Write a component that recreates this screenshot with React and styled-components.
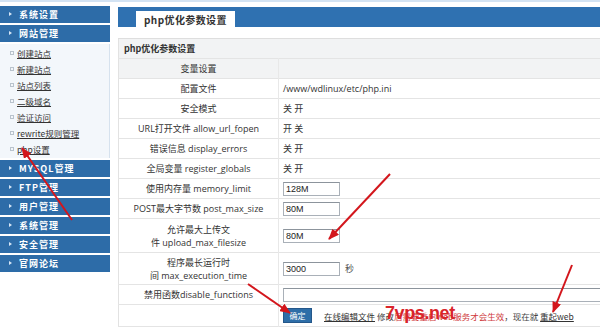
import React from 'react';
import styled, { createGlobalStyle } from 'styled-components';

const Global = createGlobalStyle`
  html, body { margin: 0; padding: 0; background: #fff; }
  body { font-family: "Open Sans", "Noto Sans CJK SC", sans-serif; }
`;

const Page = styled.div`
  position: relative;
  display: flex;
  width: 600px;
  height: 335px;
  overflow: hidden;
  border-top: 2px solid #d3e3f3;
  box-sizing: border-box;
  background: #fff;
`;

const Sidebar = styled.nav`
  width: 110px;
  flex-shrink: 0;
  padding-top: 4px;
`;

const MenuBar = styled.div`
  position: relative;
  height: 17px;
  margin-bottom: 2px;
  padding-left: 19px;
  display: flex;
  align-items: center;
  background: #2d6ca8;
  color: #fff;
  font-family: "Noto Sans CJK SC", sans-serif;
  font-weight: 700;
  font-size: 9px;
  letter-spacing: 1px;
  &::before {
    content: '';
    position: absolute;
    left: 9px;
    top: 6px;
    border-left: 3px solid #d6e6f6;
    border-top: 2.5px solid transparent;
    border-bottom: 2.5px solid transparent;
  }
`;

const SubMenu = styled.div`
  background: #f3f7fb;
  border-right: 1px solid #d6e2ee;
  margin-bottom: 2px;
  padding: 1px 0;
`;

const SubItem = styled.div`
  height: 16px;
  display: flex;
  align-items: center;
  padding-left: 10px;
  gap: 3px;
  font-family: "Noto Sans CJK SC", sans-serif;
  font-size: 8.5px;
  color: #333;
  & span { text-decoration: underline; }
`;

const Bullet = styled.i`
  width: 2px;
  height: 2px;
  border: 1px solid #b9c3cd;
`;

const Main = styled.main`
  flex: 1;
  margin-left: 8px;
  padding-top: 5px;
  min-width: 0;
`;

const TabBar = styled.div`
  height: 20px;
  padding-left: 18px;
  display: flex;
  align-items: flex-end;
  background: #2f71b1;
`;

const Tab = styled.div`
  height: 16px;
  padding: 0 8px;
  display: flex;
  align-items: center;
  background: #fff;
  color: #333;
  font-family: "Noto Sans CJK SC", sans-serif;
  font-weight: 700;
  font-size: 10px;
  letter-spacing: 0.4px;
`;

const Table = styled.table`
  margin-top: 11px;
  width: 482px;
  border-collapse: collapse;
  border-top: 1px solid #dedede;
  border-left: 1px solid #e2e2e2;
  font-size: 9px;
  color: #333;
  table-layout: fixed;
`;

const Row = styled.tr`
  height: ${p => p.$h || 20}px;
  background: ${p => (p.$grey ? '#f2f3f4' : '#fff')};
  border-bottom: 1px solid #e4e4e4;
`;

const TitleCell = styled.td`
  padding: 0 0 0 5px;
  font-family: "Noto Sans CJK SC", sans-serif;
  font-weight: 700;
  font-size: 9px;
`;

const Label = styled.td`
  padding: 0;
  text-align: center;
  line-height: 13px;
  border-right: 1px solid #e8e8e8;
`;

const Value = styled.td`
  padding: 0 0 0 4px;
  white-space: nowrap;
`;

const Field = styled.input`
  box-sizing: border-box;
  width: ${p => p.$w || 57}px;
  height: 14px;
  padding: 0 2px;
  border: 1px solid #a9b0b8;
  border-top-color: #8c949c;
  font-family: "Liberation Sans", sans-serif;
  font-size: 9px;
  color: #222;
  vertical-align: middle;
`;

const Unit = styled.span`
  margin-left: 5px;
  color: #555;
  vertical-align: middle;
`;

const Button = styled.button`
  box-sizing: border-box;
  width: 29px;
  height: 15px;
  padding: 0;
  border: 1px solid #24578a;
  background: #2e6ea8;
  color: #fff;
  font-family: "Noto Sans CJK SC", sans-serif;
  font-size: 8px;
  vertical-align: middle;
`;

const Note = styled.span`
  margin-left: 12px;
  font-family: "Noto Sans CJK SC", sans-serif;
  font-size: 8.5px;
  color: #444;
  vertical-align: middle;
`;

const NoteLink = styled.span`
  text-decoration: underline;
  color: #333;
`;

const Warn = styled.span`
  color: #cf3a3d;
`;

const Watermark = styled.div`
  position: absolute;
  left: 385px;
  top: 301px;
  font-family: "Liberation Sans", sans-serif;
  font-weight: 700;
  font-size: 18px;
  letter-spacing: -0.4px;
  color: #d9242a;
`;

const Arrows = styled.svg`
  position: absolute;
  left: 0;
  top: 0;
  pointer-events: none;
`;

const menuTop = ['系统设置'];
const sites = ['创建站点', '新建站点', '站点列表', '二级域名', '验证访问', 'rewrite规则管理', 'php设置'];
const menuBottom = ['MYSQL管理', 'FTP管理', '用户管理', '系统管理', '安全管理', '官网论坛'];

const rows = [
  { label: '配置文件', value: '/www/wdlinux/etc/php.ini' },
  { label: '安全模式', value: '关 开' },
  { label: 'URL打开文件 allow_url_fopen', value: '开 关' },
  { label: '错误信息 display_errors', value: '关 开' },
  { label: '全局变量 register_globals', value: '关 开' },
  { label: '使用内存量 memory_limit', input: '128M' },
  { label: 'POST最大字节数 post_max_size', input: '80M' },
  { label: ['允许最大上传文', '件 upload_max_filesize'], input: '80M', h: 34 },
  { label: ['程序最长运行时', '间 max_execution_time'], input: '3000', unit: '秒', h: 32 },
  { label: '禁用函数disable_functions', input: '', w: 340 },
];

const arrows = [
  [72, 218, 22, 146],
  [390, 172, 329, 237],
  [248, 282, 290, 311],
  [572, 263, 553, 310],
];

export default function App() {
  return (
    <>
      <Global />
      <Page>
        <Sidebar>
          {menuTop.map(m => <MenuBar key={m}>{m}</MenuBar>)}
          <MenuBar>网站管理</MenuBar>
          <SubMenu>
            {sites.map(s => (
              <SubItem key={s}><Bullet /><span>{s}</span></SubItem>
            ))}
          </SubMenu>
          {menuBottom.map(m => <MenuBar key={m}>{m}</MenuBar>)}
        </Sidebar>
        <Main>
          <TabBar><Tab>php优化参数设置</Tab></TabBar>
          <Table>
            <colgroup>
              <col style={{ width: 160 }} />
              <col />
            </colgroup>
            <tbody>
              <Row $grey><TitleCell colSpan={2}>php优化参数设置</TitleCell></Row>
              <Row $grey><Label>变量设置</Label><Value /></Row>
              {rows.map((r, i) => (
                <Row key={i} $h={r.h}>
                  <Label>
                    {Array.isArray(r.label) ? <>{r.label[0]}<br />{r.label[1]}</> : r.label}
                  </Label>
                  <Value>
                    {r.input !== undefined ? (
                      <>
                        <Field $w={r.w} defaultValue={r.input} />
                        {r.unit && <Unit>{r.unit}</Unit>}
                      </>
                    ) : r.value}
                  </Value>
                </Row>
              ))}
              <Row $h={22}>
                <Label />
                <Value>
                  <Button>确定</Button>
                  <Note>
                    <NoteLink>在线编辑文件</NoteLink> 修改<Warn>后需要重启web服务才会生效</Warn>，现在就 <NoteLink>重起web</NoteLink>
                  </Note>
                </Value>
              </Row>
            </tbody>
          </Table>
        </Main>
        <Watermark>7vps.net</Watermark>
        <Arrows width="600" height="335" viewBox="0 0 600 335">
          <defs>
            <marker id="head" markerUnits="userSpaceOnUse" markerWidth="11" markerHeight="9" refX="10" refY="4.5" orient="auto">
              <path d="M0,0 L11,4.5 L0,9 z" fill="#d3161c" />
            </marker>
          </defs>
          {arrows.map(([x1, y1, x2, y2], i) => (
            <line key={i} x1={x1} y1={y1} x2={x2} y2={y2} stroke="#d3161c" strokeWidth="2" markerEnd="url(#head)" />
          ))}
        </Arrows>
      </Page>
    </>
  );
}
